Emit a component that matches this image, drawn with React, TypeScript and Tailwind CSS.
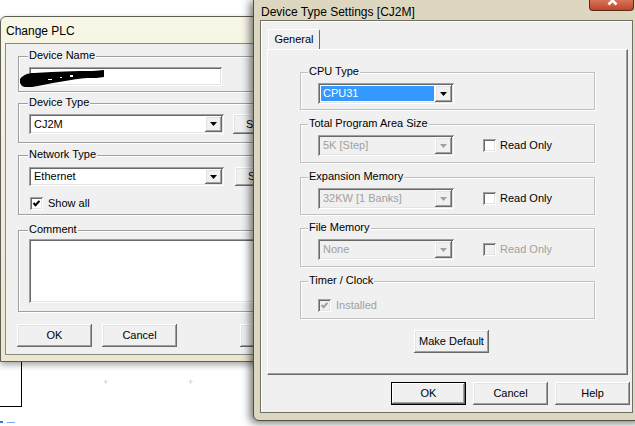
import React from 'react';

const sunken =
  'shadow-[inset_1px_1px_0_#a0a0a0,inset_-1px_-1px_0_#ffffff,inset_2px_2px_0_#696969,inset_-2px_-2px_0_#e3e3e3]';
const raised =
  'shadow-[inset_-1px_-1px_0_#696969,inset_1px_1px_0_#ffffff,inset_-2px_-2px_0_#a0a0a0,inset_2px_2px_0_#e3e3e3]';

const Arrow = ({ disabled }: { disabled?: boolean }) => (
  <svg width="7" height="4" viewBox="0 0 7 4">
    <path d="M0 0h7L3.5 4z" fill={disabled ? '#a0a0a0' : '#000'} />
  </svg>
);

interface ComboProps {
  value: string;
  width: number;
  height: number;
  disabled?: boolean;
  selected?: boolean;
}

const Combo: React.FC<ComboProps> = ({ value, width, height, disabled, selected }) => (
  <div
    className={`flex shrink-0 p-[2px] ${sunken} ${disabled ? 'bg-[#f0f0f0]' : 'bg-white'}`}
    style={{ width, height }}
  >
    <div className="flex flex-1 items-center p-[1px]">
      <div
        className={`flex h-full flex-1 items-center pl-[2px] leading-none ${
          selected ? 'bg-[#3399ff] text-white' : disabled ? 'text-[#a0a0a0]' : 'text-black'
        }`}
      >
        {value}
      </div>
    </div>
    <div className={`flex w-[17px] items-center justify-center bg-[#f0f0f0] ${raised}`}>
      <Arrow disabled={disabled} />
    </div>
  </div>
);

const CheckBox = ({ checked, disabled }: { checked?: boolean; disabled?: boolean }) => (
  <div
    className={`relative h-[13px] w-[13px] shrink-0 ${sunken} ${disabled ? 'bg-[#f0f0f0]' : 'bg-white'}`}
  >
    {checked && (
      <svg className="absolute left-0 top-0" width="13" height="13" viewBox="0 0 13 13">
        <path
          d="M3.5 6l2 2.2 4-4.4"
          fill="none"
          stroke={disabled ? '#a0a0a0' : '#000'}
          strokeWidth="2"
        />
      </svg>
    )}
  </div>
);

const Button = ({
  label,
  width = 75,
  height = 23,
  isDefault,
}: {
  label: string;
  width?: number;
  height?: number;
  isDefault?: boolean;
}) => (
  <div
    className={`flex shrink-0 items-center justify-center whitespace-nowrap bg-[#f0f0f0] text-black ${
      isDefault
        ? 'border border-black shadow-[inset_-1px_-1px_0_#696969,inset_1px_1px_0_#ffffff,inset_-2px_-2px_0_#a0a0a0]'
        : raised
    }`}
    style={{ width, height }}
  >
    {label}
  </div>
);

const Group = ({
  label,
  height,
  labelLeft,
  tone,
  className,
  children,
}: {
  label: string;
  height: number;
  labelLeft: string;
  tone: string;
  className?: string;
  children: React.ReactNode;
}) => (
  <div
    className={`relative shrink-0 border shadow-[1px_1px_0_#ffffff,inset_1px_1px_0_#ffffff] ${tone} ${className ?? ''}`}
    style={{ height }}
  >
    <span className={`absolute -top-[8px] bg-[#f0f0f0] px-[1px] leading-[13px] text-black ${labelLeft}`}>
      {label}
    </span>
    {children}
  </div>
);

// scribble that hides the device name
const Redaction = () => (
  <svg className="absolute left-[19px] top-[53px]" width="86" height="17" viewBox="0 0 86 17">
    <path
      d="M0 9C3 5 8 3 14 3c6 0 12-1 18-1 9 0 18-1 28-1 9 0 17 0 24-1v7c-5 1-10 1-16 1-6 0-11 1-17 2-6 1-12 2-18 3-7 1-13 3-21 4-4 1-8 0-10-1L0 13z"
      fill="#000"
    />
    <rect x="50" y="5" width="3" height="2" fill="#fff" />
    <rect x="40" y="7" width="2" height="1" fill="#fff" />
    <rect x="28" y="9" width="4" height="1" fill="#fff" />
  </svg>
);

const ChangePlc = () => (
  <div className="absolute left-0 top-[16px] h-[346px] w-[340px] rounded-tl-[6px] border border-[#5f5f55] bg-gradient-to-b from-[#f8f6e6] to-[#ebe6cf] shadow-[0_3px_6px_rgba(0,0,0,0.35)]">
    <div className="flex h-[26px] items-center pl-[5px] pt-[2px] text-[12px] text-black">Change PLC</div>
    <div className="ml-[4px] flex h-[312px] flex-col border border-[#8a8a7e] bg-[#f0f0f0] pl-[12px] pt-[12px]">
      <Group label="Device Name" height={36} labelLeft="left-[9px]" tone="border-[#a0a0a0]" className="w-[330px]">
        <div className={`ml-[10px] mt-[10px] h-[19px] w-[193px] bg-white ${sunken}`} />
      </Group>
      <Group label="Device Type" height={40} labelLeft="left-[9px]" tone="border-[#a0a0a0]" className="mt-[11px] w-[330px]">
        <div className="flex items-center pl-[10px] pt-[10px]">
          <Combo value="CJ2M" width={195} height={20} />
          <div className="ml-[9px]">
            <Button label="Settings..." height={20} />
          </div>
        </div>
      </Group>
      <Group label="Network Type" height={60} labelLeft="left-[9px]" tone="border-[#a0a0a0]" className="mt-[12px] w-[330px]">
        <div className="flex items-center pl-[10px] pt-[11px]">
          <Combo value="Ethernet" width={195} height={19} />
          <div className="ml-[11px]">
            <Button label="Settings..." height={19} />
          </div>
        </div>
        <div className="mt-[9px] flex items-center gap-[5px] pl-[11px] text-black">
          <CheckBox checked />
          <span>Show all</span>
        </div>
      </Group>
      <Group label="Comment" height={82} labelLeft="left-[9px]" tone="border-[#a0a0a0]" className="mt-[15px] w-[330px]">
        <div className={`ml-[10px] mt-[8px] h-[64px] w-[300px] bg-white ${sunken}`} />
      </Group>
      <div className="-ml-[1px] mt-[12px] flex">
        <Button label="OK" />
        <div className="ml-[10px]">
          <Button label="Cancel" />
        </div>
        <div className="ml-[63px]">
          <Button label="Help" />
        </div>
      </div>
    </div>
    <Redaction />
  </div>
);

const MemoryRow = ({
  value,
  disabled,
  readOnlyDisabled,
}: {
  value: string;
  disabled?: boolean;
  readOnlyDisabled?: boolean;
}) => (
  <div className="flex items-center pl-[17px] pt-[10px]">
    <Combo value={value} width={136} height={21} disabled={disabled} />
    <div className="ml-[29px]">
      <CheckBox disabled={readOnlyDisabled} />
    </div>
    <span className={`ml-[4px] ${readOnlyDisabled ? 'text-[#a0a0a0]' : 'text-black'}`}>Read Only</span>
  </div>
);

const DeviceTypeSettings = () => (
  <div className="absolute left-[253px] -top-[1px] h-[422px] w-[392px] rounded-b-[6px] border border-[#4f4f45] bg-[#ddd7bf] shadow-[-3px_2px_8px_rgba(0,0,0,0.55)]">
    <div className="flex h-[20px] items-center pl-[7px] pt-[3px] text-[12px] text-black">
      Device Type Settings [CJ2M]
    </div>
    <div className="absolute left-[335px] top-0 h-[11px] w-[45px] overflow-hidden rounded-b-[4px] border border-t-0 border-[#5b2a1c] bg-gradient-to-b from-[#d8745a] to-[#c0432a]">
      <svg className="absolute left-[17px] -top-[5px]" width="11" height="11" viewBox="0 0 11 11">
        <path d="M1.5 1.5l8 8M9.5 1.5l-8 8" stroke="#fff" strokeWidth="2.6" />
      </svg>
    </div>
    <div className="ml-[6px] flex h-[393px] w-[373px] flex-col border border-[#6f6f63] bg-[#f0f0f0] pl-[6px] pt-[8px] shadow-[inset_1px_1px_0_#ffffff]">
      <div className="ml-[1px] flex h-[20px] w-[52px] items-center justify-center rounded-t-[2px] border-l border-t border-r border-l-white border-t-white border-r-[#696969] text-black">
        General
      </div>
      <div className="flex h-[326px] w-[361px] flex-col border border-l-white border-t-white border-r-[#696969] border-b-[#696969] pl-[32px] pt-[22px] shadow-[inset_-1px_-1px_0_#a0a0a0]">
        <Group label="CPU Type" height={38} labelLeft="left-[7px]" tone="border-[#c0c0c0]" className="w-[295px]">
          <div className="flex items-center pl-[17px] pt-[10px]">
            <Combo value="CPU31" width={136} height={21} selected />
          </div>
        </Group>
        <Group label="Total Program Area Size" height={39} labelLeft="left-[7px]" tone="border-[#c0c0c0]" className="mt-[14px] w-[295px]">
          <MemoryRow value="5K [Step]" disabled />
        </Group>
        <Group label="Expansion Memory" height={38} labelLeft="left-[7px]" tone="border-[#c0c0c0]" className="mt-[14px] w-[295px]">
          <MemoryRow value="32KW [1 Banks]" disabled />
        </Group>
        <Group label="File Memory" height={39} labelLeft="left-[7px]" tone="border-[#c0c0c0]" className="mt-[13px] w-[295px]">
          <MemoryRow value="None" disabled readOnlyDisabled />
        </Group>
        <Group label="Timer / Clock" height={38} labelLeft="left-[7px]" tone="border-[#c0c0c0]" className="mt-[14px] w-[295px]">
          <div className="flex items-center gap-[5px] pl-[17px] pt-[15px] text-[#a0a0a0]">
            <CheckBox checked disabled />
            <span>Installed</span>
          </div>
        </Group>
        <div className="ml-[114px] mt-[11px]">
          <Button label="Make Default" />
        </div>
      </div>
      <div className="mt-[7px] flex gap-[7px] pl-[124px]">
        <Button label="OK" isDefault />
        <Button label="Cancel" />
        <Button label="Help" />
      </div>
    </div>
  </div>
);

export default function App() {
  return (
    <div className="relative h-[426px] w-[635px] overflow-hidden bg-white font-['Liberation_Sans',Arial,sans-serif] text-[11px]">
      {/* desktop behind the dialogs */}
      <div className="absolute left-[21px] top-[360px] h-[47px] w-[1px] bg-black" />
      <div className="absolute left-0 top-[406px] h-[1px] w-[22px] bg-black" />
      <span className="absolute left-[103px] top-[378px] text-[9px] leading-none text-[#c8c8c8]">+</span>
      <span className="absolute left-[188px] top-[378px] text-[9px] leading-none text-[#c8c8c8]">+</span>
      <div className="absolute left-0 top-[421px] h-[2px] w-[3px] bg-[#3a7bd5]" />
      <div className="absolute left-[7px] top-[422px] h-[1px] w-[8px] bg-[#7aa8e8]" />

      <ChangePlc />
      <DeviceTypeSettings />
    </div>
  );
}
